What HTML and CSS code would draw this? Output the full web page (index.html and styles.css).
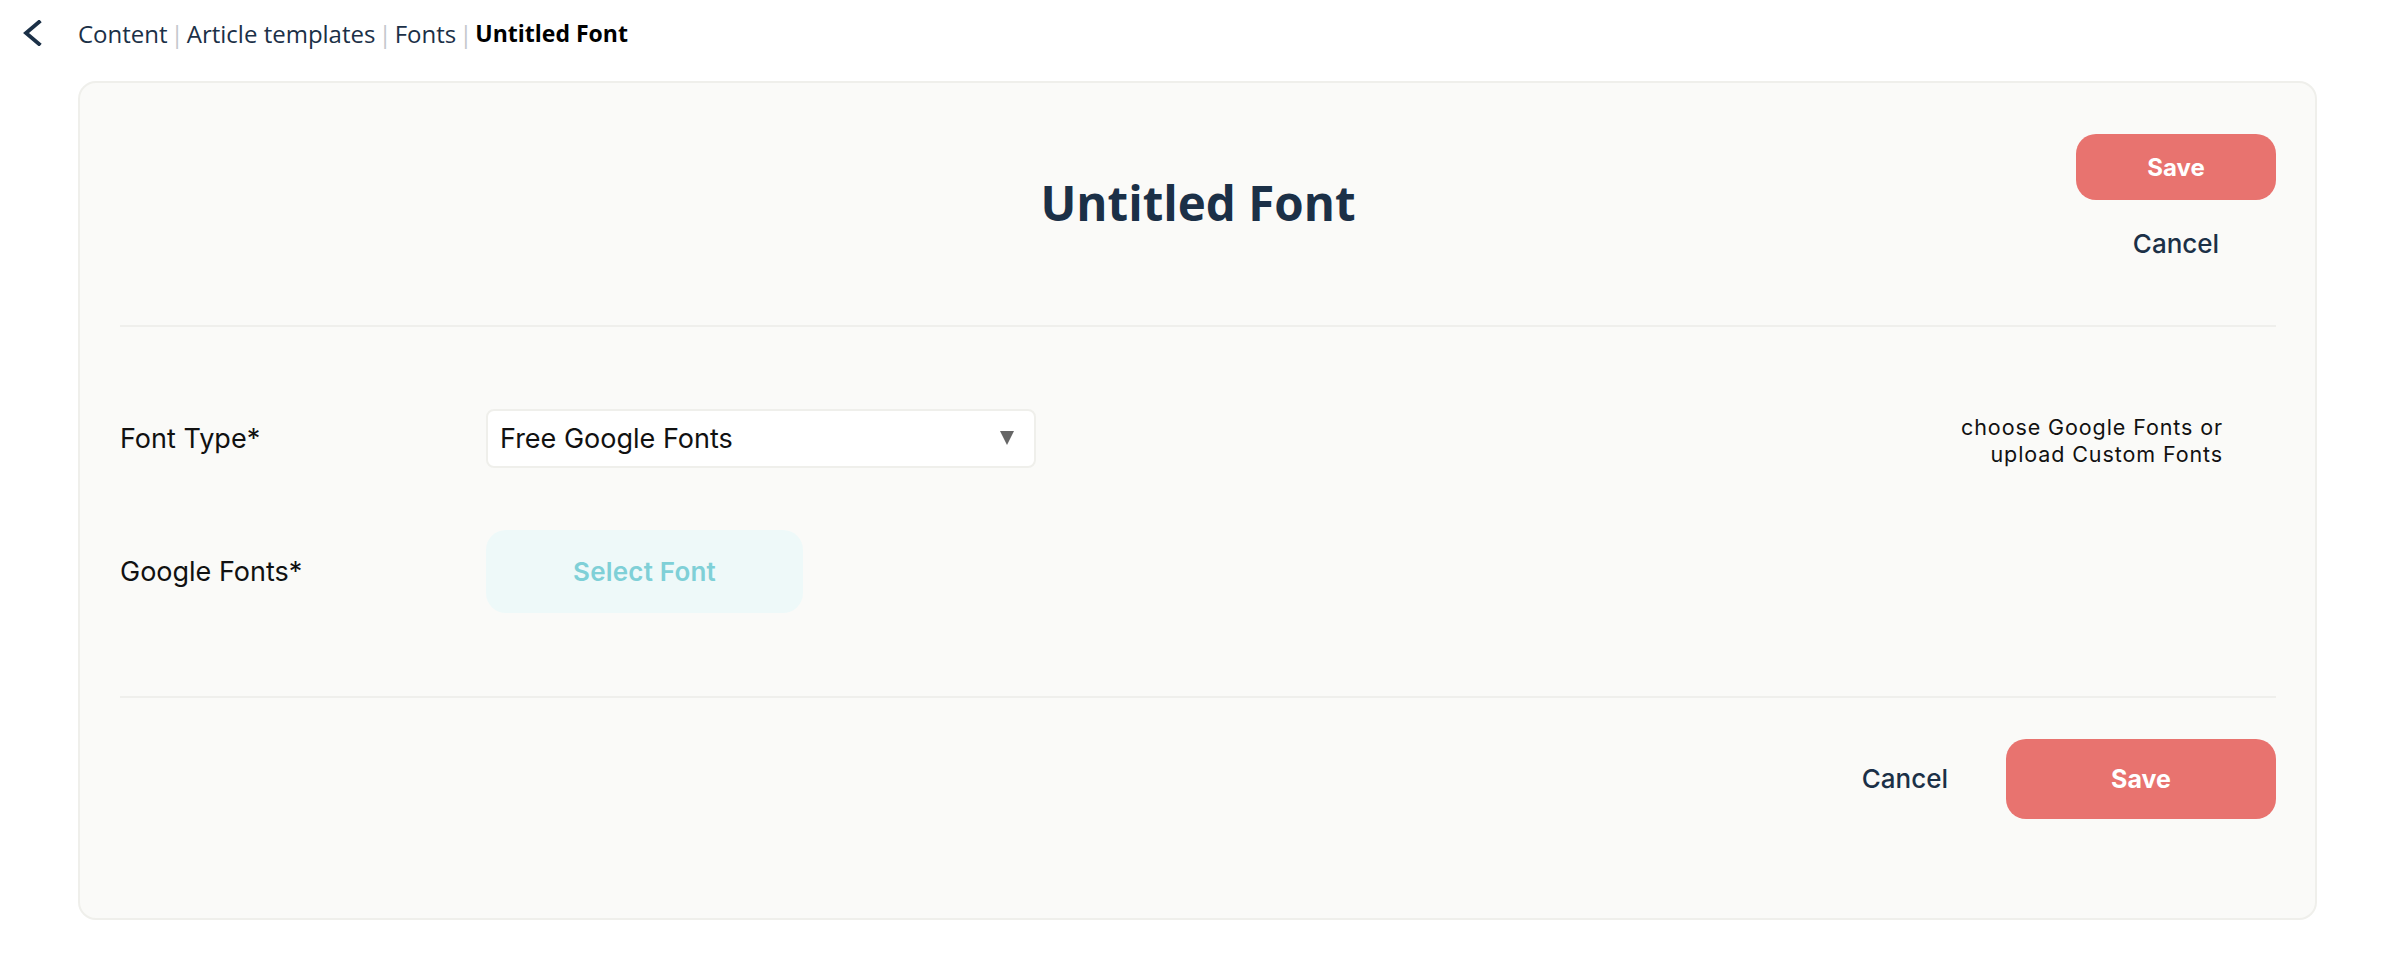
FILE: index.html
```html
<!DOCTYPE html>
<html lang="en">
<head>
<meta charset="utf-8">
<title>Untitled Font</title>
<link rel="stylesheet" href="styles.css">
</head>
<body>
<div class="topbar">
  <button class="back" aria-label="Back">
    <svg width="20" height="26" viewBox="0 0 20 26"><polyline points="17,2 4,13 17,24" fill="none" stroke="#1b3047" stroke-width="3.8" stroke-linecap="square" stroke-linejoin="miter"/></svg>
  </button>
  <nav class="crumbs">
    <span class="crumb">Content</span><span class="sep">|</span><span class="crumb">Article templates</span><span class="sep">|</span><span class="crumb">Fonts</span><span class="sep">|</span><span class="crumb current">Untitled Font</span>
  </nav>
</div>
<main class="card">
  <header class="card-head">
    <div class="spacer"></div>
    <h1 class="title">Untitled Font</h1>
    <div class="head-actions">
      <button class="btn-save">Save</button>
      <button class="btn-cancel">Cancel</button>
    </div>
  </header>
  <section class="form">
    <div class="row">
      <label class="label">Font Type*</label>
      <div class="select">
        <span class="select-value">Free Google Fonts</span>
        <span class="caret"></span>
      </div>
      <p class="help">choose Google Fonts or<br>upload Custom Fonts</p>
    </div>
    <div class="row">
      <label class="label">Google Fonts*</label>
      <button class="select-font">Select Font</button>
    </div>
  </section>
  <footer class="card-foot">
    <button class="btn-cancel foot">Cancel</button>
    <button class="btn-save lg">Save</button>
  </footer>
</main>
</body>
</html>
```
FILE: styles.css
```css
* { box-sizing: border-box; }
body {
  margin: 0;
  background: #ffffff;
  font-family: "Inter", "Liberation Sans", sans-serif;
  color: #111111;
}
button {
  font-family: inherit;
  border: none;
  background: none;
  padding: 0;
  cursor: pointer;
}

/* top bar */
.topbar {
  height: 66px;
  display: flex;
  align-items: center;
  padding-left: 22px;
  gap: 36px;
}
.back { display: flex; width: 20px; height: 26px; }
.crumbs {
  font-family: "Open Sans", "DejaVu Sans", sans-serif;
  font-size: 24px;
  color: #1b3047;
  display: flex;
  align-items: center;
  white-space: pre;
}
.sep { color: #c4c7cc; margin: 0 3px; }
.crumb.current { font-weight: 700; font-size: 23px; color: #000; }

/* card */
.card {
  margin: 15px 83px 40px 78px;
  border: 2px solid #efefeb;
  border-radius: 18px;
  background: #fafaf8;
  padding: 0 39px 0 40px;
}
.card-head {
  display: grid;
  grid-template-columns: 1fr auto 1fr;
  padding: 51px 0 66px;
  border-bottom: 2px solid #efefec;
}
.title {
  margin: 45px 0 0;
  align-self: start;
  font-family: "Open Sans", "DejaVu Sans", sans-serif;
  font-weight: 700;
  font-size: 47.5px;
  line-height: 1;
  color: #1b3047;
}
.head-actions {
  justify-self: end;
  width: 200px;
  display: flex;
  flex-direction: column;
  align-items: center;
  gap: 29px;
}
.btn-save {
  width: 200px;
  height: 66px;
  border-radius: 20px;
  background: #e8736f;
  color: #ffffff;
  font-size: 24px;
  font-weight: 700;
}
.btn-save.lg {
  width: 270px;
  height: 80px;
  font-size: 25px;
}
.btn-cancel {
  font-size: 26px;
  font-weight: 500;
  line-height: 30px;
  color: #1b3047;
}

/* form */
.form {
  padding: 81px 0 83px;
  display: flex;
  flex-direction: column;
  gap: 62px;
  border-bottom: 2px solid #efefec;
}
.row {
  display: grid;
  grid-template-columns: 366px 550px 1fr;
  align-items: center;
}
.label {
  font-size: 27px;
  color: #111;
}
.select {
  height: 59px;
  background: #ffffff;
  border: 2px solid #efefeb;
  border-radius: 8px;
  display: flex;
  align-items: center;
  justify-content: space-between;
  padding: 0 20px 0 12px;
}
.select-value { font-size: 27px; color: #111; }
.caret {
  width: 0;
  height: 0;
  border-left: 7.5px solid transparent;
  border-right: 7.5px solid transparent;
  border-top: 14px solid #666666;
}
.help {
  margin: 6px 53px 0 0;
  justify-self: end;
  text-align: right;
  font-size: 21.5px;
  letter-spacing: 0.9px;
  line-height: 27px;
  color: #111;
}
.select-font {
  width: 317px;
  height: 83px;
  border-radius: 20px;
  background: #eef9f9;
  color: #7fd0d7;
  font-size: 26px;
  letter-spacing: 0.2px;
  font-weight: 600;
}

/* footer */
.card-foot {
  display: flex;
  justify-content: flex-end;
  align-items: center;
  gap: 58px;
  padding: 41px 0 99px;
}
```
